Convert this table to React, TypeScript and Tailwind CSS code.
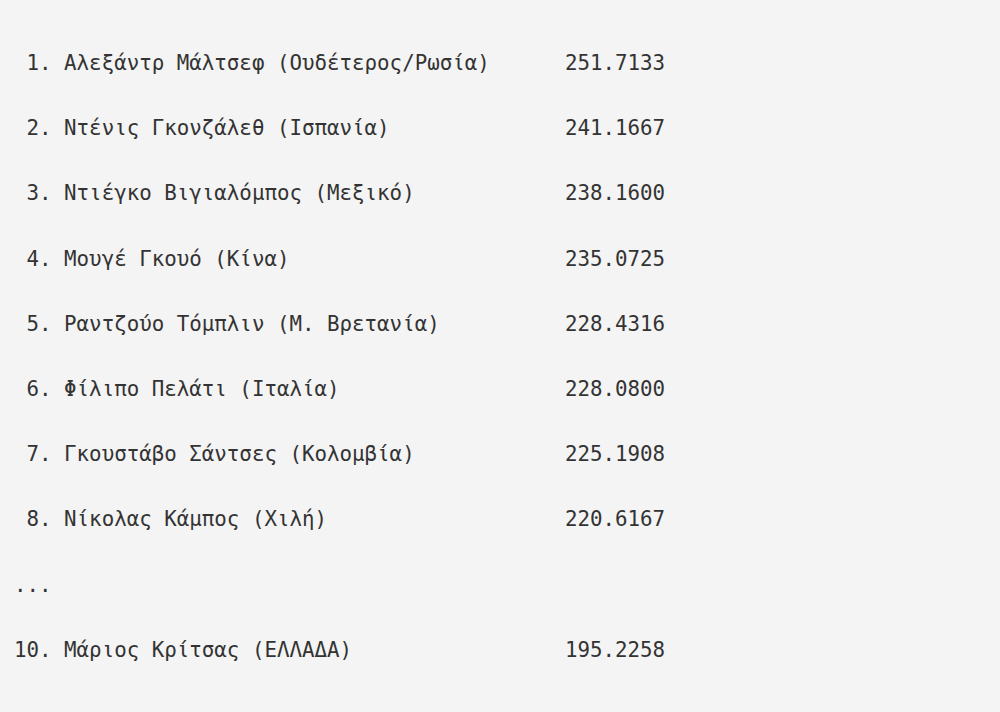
const rows = [
  { rank: " 1.", name: "Αλεξάντρ Μάλτσεφ (Ουδέτερος/Ρωσία)", score: "251.7133" },
  { rank: " 2.", name: "Ντένις Γκονζάλεθ (Ισπανία)", score: "241.1667" },
  { rank: " 3.", name: "Ντιέγκο Βιγιαλόμπος (Μεξικό)", score: "238.1600" },
  { rank: " 4.", name: "Μουγέ Γκουό (Κίνα)", score: "235.0725" },
  { rank: " 5.", name: "Ραντζούο Τόμπλιν (Μ. Βρετανία)", score: "228.4316" },
  { rank: " 6.", name: "Φίλιπο Πελάτι (Ιταλία)", score: "228.0800" },
  { rank: " 7.", name: "Γκουστάβο Σάντσες (Κολομβία)", score: "225.1908" },
  { rank: " 8.", name: "Νίκολας Κάμπος (Χιλή)", score: "220.6167" },
  null,
  { rank: "10.", name: "Μάριος Κρίτσας (ΕΛΛΑΔΑ)", score: "195.2258" },
];

export default function App() {
  return (
    <div className="w-[1000px] h-[712px] bg-[#f4f4f4] overflow-hidden">
      <div
        className="pt-[31px] pl-[14px] text-[20.8px] leading-[65.2px] text-[#333333] whitespace-pre"
        style={{ fontFamily: '"DejaVu Sans Mono", "Liberation Mono", monospace' }}
      >
        {rows.map((r, i) =>
          r ? (
            <div key={i} className="flex">
              <span className="w-[44ch] shrink-0">{`${r.rank} ${r.name}`}</span>
              <span>{r.score}</span>
            </div>
          ) : (
            <div key={i}>...</div>
          )
        )}
      </div>
    </div>
  );
}
